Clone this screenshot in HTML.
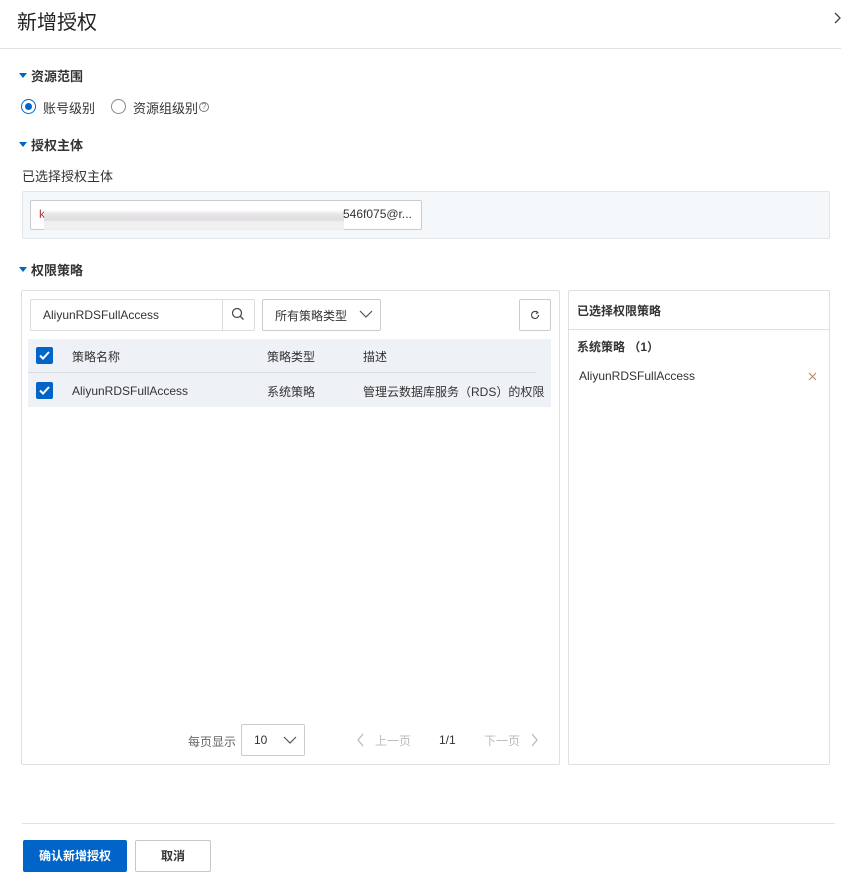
<!DOCTYPE html>
<html><head><meta charset="utf-8"><style>
*{box-sizing:border-box;margin:0;padding:0}
body{width:841px;height:887px;background:#fff;position:relative;overflow:hidden;font-family:"Liberation Sans","Noto Sans CJK SC",sans-serif;color:#333;font-size:12px}
.a{position:absolute;white-space:nowrap}
.b{font-weight:bold}
.tri{position:absolute;width:0;height:0;border-left:4px solid transparent;border-right:4px solid transparent;border-top:5px solid #0064c8}
.cb{position:absolute;width:17px;height:17px;background:#0064c8;border-radius:2px}
.cb svg{position:absolute;left:2px;top:2px}
</style></head><body>
<div class="a" style="left:17px;top:6px;font-size:20px;color:#222">新增授权</div>
<svg class="a" style="left:834px;top:12px" width="8" height="12"><path d="M1 1 L6 6 L1 11" stroke="#444" stroke-width="1.3" fill="none"/></svg>
<div class="a" style="left:0;top:48px;width:841px;height:1px;background:#e3e3e3"></div>

<div class="tri" style="left:19px;top:73px"></div>
<div class="a b" style="left:31px;top:66px;font-size:13px">资源范围</div>
<div class="a" style="left:21px;top:99px;width:15px;height:15px;border:1px solid #0064c8;border-radius:50%"><div style="position:absolute;left:3px;top:3px;width:7px;height:7px;border-radius:50%;background:#0064c8"></div></div>
<div class="a" style="left:43px;top:98px;font-size:13px">账号级别</div>
<div class="a" style="left:111px;top:99px;width:15px;height:15px;border:1px solid #888;border-radius:50%"></div>
<div class="a" style="left:133px;top:98px;font-size:13px">资源组级别</div>
<div class="a" style="left:199px;top:102px;width:10px;height:10px;border:1px solid #777;border-radius:50%;font-size:8px;line-height:8px;text-align:center;color:#777">?</div>

<div class="tri" style="left:19px;top:142px"></div>
<div class="a b" style="left:31px;top:135px;font-size:13px">授权主体</div>
<div class="a" style="left:22px;top:166px;font-size:13px">已选择授权主体</div>
<div class="a" style="left:22px;top:191px;width:808px;height:48px;background:#f5f8fa;border:1px solid #e3e6e8;border-radius:2px"></div>
<div class="a" style="left:30px;top:200px;width:392px;height:30px;background:#fff;border:1px solid #ccc;border-radius:2px"></div>
<div class="a" style="left:39px;top:207px;font-size:12px;color:#a33">k</div>
<div class="a" style="left:44px;top:206px;width:300px;height:24px;background:linear-gradient(180deg,#fff 0,#fff 4px,#e6e3e6 8px,#dcd9dd 14px,#eeeeee 16px,#f0f0f0 24px);opacity:.9"></div>
<div class="a" style="left:343px;top:207px;font-size:12px;color:#333">546f075@r...</div>

<div class="tri" style="left:19px;top:267px"></div>
<div class="a b" style="left:31px;top:260px;font-size:13px">权限策略</div>

<div class="a" style="left:21px;top:290px;width:539px;height:475px;border:1px solid #e0e0e0;border-radius:2px"></div>
<div class="a" style="left:30px;top:299px;width:225px;height:32px;border:1px solid #ddd;border-radius:2px"></div>
<div class="a" style="left:222px;top:299px;width:1px;height:32px;background:#ddd"></div>
<div class="a" style="left:43px;top:308px;font-size:12px">AliyunRDSFullAccess</div>
<svg class="a" style="left:231px;top:307px" width="14" height="14"><circle cx="6" cy="6" r="4.5" stroke="#444" stroke-width="1.2" fill="none"/><path d="M9.3 9.3 L12.5 12.5" stroke="#444" stroke-width="1.3"/></svg>
<div class="a" style="left:262px;top:299px;width:119px;height:32px;border:1px solid #ccc;border-radius:2px"></div>
<div class="a" style="left:275px;top:307px;font-size:12px">所有策略类型</div>
<svg class="a" style="left:359px;top:309px" width="14" height="10"><path d="M1 2 L7 8 L13 2" stroke="#555" stroke-width="1.2" fill="none"/></svg>
<div class="a" style="left:519px;top:299px;width:32px;height:32px;border:1px solid #ccc;border-radius:2px"></div>
<svg class="a" style="left:530px;top:310px" width="10" height="10"><path d="M7.5 2.5 A3.5 3.5 0 1 0 8.5 5" stroke="#444" stroke-width="1.1" fill="none"/><path d="M6 1 L8 2.5 L6 4" stroke="#444" stroke-width="1" fill="none"/></svg>

<div class="a" style="left:28px;top:339px;width:523px;height:68px;background:#eef1f5"></div>
<div class="a" style="left:28px;top:372px;width:508px;height:1px;background:#d9dde2"></div>
<div class="cb" style="left:36px;top:347px"><svg width="13" height="13"><path d="M2 6.5 L5 9.5 L11 3" stroke="#fff" stroke-width="2" fill="none"/></svg></div>
<div class="cb" style="left:36px;top:382px"><svg width="13" height="13"><path d="M2 6.5 L5 9.5 L11 3" stroke="#fff" stroke-width="2" fill="none"/></svg></div>
<div class="a" style="left:72px;top:348px">策略名称</div>
<div class="a" style="left:267px;top:348px">策略类型</div>
<div class="a" style="left:363px;top:348px">描述</div>
<div class="a" style="left:72px;top:384px">AliyunRDSFullAccess</div>
<div class="a" style="left:267px;top:383px">系统策略</div>
<div class="a" style="left:363px;top:383px">管理云数据库服务（RDS）的权限</div>

<div class="a" style="left:188px;top:733px;color:#666">每页显示</div>
<div class="a" style="left:241px;top:724px;width:64px;height:32px;border:1px solid #ccc;border-radius:2px"></div>
<div class="a" style="left:254px;top:733px">10</div>
<svg class="a" style="left:283px;top:735px" width="14" height="10"><path d="M1 2 L7 8 L13 2" stroke="#555" stroke-width="1.2" fill="none"/></svg>
<svg class="a" style="left:357px;top:733px" width="8" height="14"><path d="M6 1 L1 7 L6 13" stroke="#bbb" stroke-width="1.3" fill="none"/></svg>
<div class="a" style="left:375px;top:732px;color:#bbb">上一页</div>
<div class="a" style="left:439px;top:733px;color:#333">1/1</div>
<div class="a" style="left:484px;top:732px;color:#bbb">下一页</div>
<svg class="a" style="left:530px;top:733px" width="8" height="14"><path d="M2 1 L7 7 L2 13" stroke="#bbb" stroke-width="1.3" fill="none"/></svg>

<div class="a" style="left:568px;top:290px;width:262px;height:475px;border:1px solid #e0e0e0;border-radius:2px"></div>
<div class="a" style="left:568px;top:329px;width:262px;height:1px;background:#e0e0e0"></div>
<div class="a b" style="left:577px;top:302px">已选择权限策略</div>
<div class="a b" style="left:577px;top:338px">系统策略 （1）</div>
<div class="a" style="left:579px;top:369px">AliyunRDSFullAccess</div>
<svg class="a" style="left:808px;top:372px" width="9" height="9"><path d="M1 1 L8 8 M8 1 L1 8" stroke="#b86" stroke-width="1.1"/></svg>

<div class="a" style="left:22px;top:823px;width:813px;height:1px;background:#e3e3e3"></div>
<div class="a b" style="left:23px;top:840px;width:104px;height:32px;background:#0064c8;color:#fff;border-radius:2px;text-align:center;line-height:32px">确认新增授权</div>
<div class="a b" style="left:135px;top:840px;width:76px;height:32px;border:1px solid #c6c6c6;border-radius:2px;text-align:center;line-height:30px">取消</div>
</body></html>
